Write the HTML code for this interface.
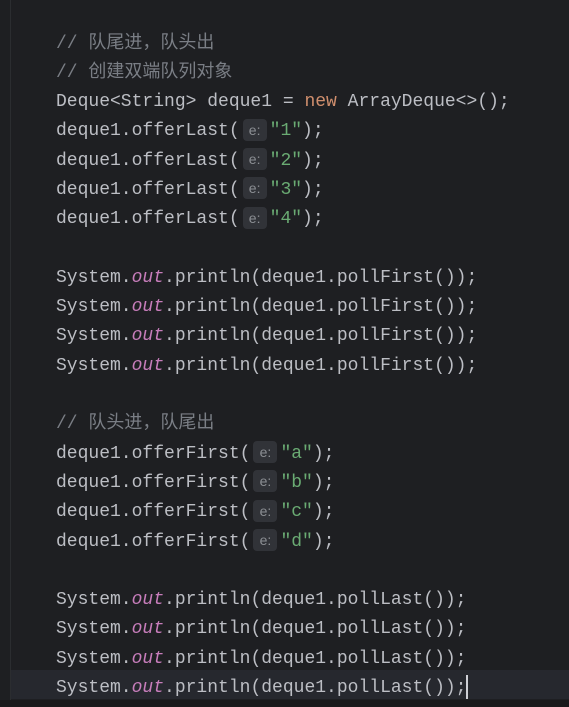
<!DOCTYPE html>
<html><head><meta charset="utf-8"><style>
html,body{margin:0;padding:0;}
body{width:569px;height:707px;background:#1e1f22;overflow:hidden;position:relative;font-family:"Liberation Mono","Noto Sans CJK SC",monospace;font-size:18px;color:#bcbec4;}
.gut{position:absolute;left:0;top:0;width:10px;height:700px;background:#1e1f22;border-right:1px solid #2b2d30;}
.hl{position:absolute;left:11px;top:670px;width:558px;height:29px;background:#26282e;}
.bot{position:absolute;left:0;top:700px;width:569px;height:7px;background:#19191b;}
.code{position:absolute;left:56px;top:29.5px;}
.l{height:29.3px;line-height:29.3px;white-space:pre;position:relative;}
.c{color:#7a7e85;}
.k{color:#cf8e6d;}
.s{color:#6aab73;}
.o{color:#c77dbb;font-style:italic;}
.h{display:inline-block;width:24px;height:22px;line-height:22px;background:#313338;color:#8c8f94;font-family:"Liberation Sans",sans-serif;font-size:14px;text-align:center;border-radius:4px;margin:0 3px 0 3px;vertical-align:middle;position:relative;top:-1px;}
.caret{display:inline-block;width:2px;height:24px;background:#ced0d6;vertical-align:middle;}
</style></head><body>
<div class="gut"></div>
<div class="hl"></div>
<div class="bot"></div>
<div class="code">
<div class="l c">// 队尾进，队头出</div>
<div class="l c">// 创建双端队列对象</div>
<div class="l">Deque&lt;String&gt; deque1 = <span class="k">new</span> ArrayDeque&lt;&gt;();</div>
<div class="l">deque1.offerLast(<span class="h">e:</span><span class="s">"1"</span>);</div>
<div class="l">deque1.offerLast(<span class="h">e:</span><span class="s">"2"</span>);</div>
<div class="l">deque1.offerLast(<span class="h">e:</span><span class="s">"3"</span>);</div>
<div class="l">deque1.offerLast(<span class="h">e:</span><span class="s">"4"</span>);</div>
<div class="l"> </div>
<div class="l">System.<span class="o">out</span>.println(deque1.pollFirst());</div>
<div class="l">System.<span class="o">out</span>.println(deque1.pollFirst());</div>
<div class="l">System.<span class="o">out</span>.println(deque1.pollFirst());</div>
<div class="l">System.<span class="o">out</span>.println(deque1.pollFirst());</div>
<div class="l"> </div>
<div class="l c">// 队头进，队尾出</div>
<div class="l">deque1.offerFirst(<span class="h">e:</span><span class="s">"a"</span>);</div>
<div class="l">deque1.offerFirst(<span class="h">e:</span><span class="s">"b"</span>);</div>
<div class="l">deque1.offerFirst(<span class="h">e:</span><span class="s">"c"</span>);</div>
<div class="l">deque1.offerFirst(<span class="h">e:</span><span class="s">"d"</span>);</div>
<div class="l"> </div>
<div class="l">System.<span class="o">out</span>.println(deque1.pollLast());</div>
<div class="l">System.<span class="o">out</span>.println(deque1.pollLast());</div>
<div class="l">System.<span class="o">out</span>.println(deque1.pollLast());</div>
<div class="l">System.<span class="o">out</span>.println(deque1.pollLast());<span class="caret"></span></div>
</div>
</body></html>
